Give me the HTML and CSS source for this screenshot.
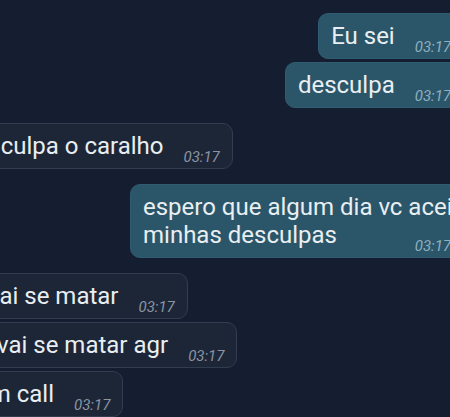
FILE: index.html
```html
<!DOCTYPE html>
<html lang="pt">
<head>
<meta charset="utf-8">
<link rel="stylesheet" href="styles.css">
</head>
<body>
<div class="chat">
  <div class="row out"><div class="bubble"><span class="text">Eu sei</span><span class="time">03:17</span></div></div>
  <div class="row out"><div class="bubble"><span class="text">desculpa</span><span class="time">03:17</span></div></div>
  <div class="row in gap"><div class="bubble cut-a"><span class="text">desculpa o caralho</span><span class="time">03:17</span></div></div>
  <div class="row out gap"><div class="bubble long"><span class="text">espero que algum dia vc aceite<br>minhas desculpas</span><span class="time">03:17</span></div></div>
  <div class="row in gap"><div class="bubble cut-b"><span class="text">vai se matar</span><span class="time">03:17</span></div></div>
  <div class="row in"><div class="bubble cut-c"><span class="text">vai se matar agr</span><span class="time">03:17</span></div></div>
  <div class="row in"><div class="bubble cut-d"><span class="text">em call</span><span class="time">03:17</span></div></div>
</div>
</body>
</html>
```
FILE: styles.css
```css
html, body {
  margin: 0;
  padding: 0;
  width: 450px;
  height: 417px;
  overflow: hidden;
  background: #151d31;
}
.chat {
  display: flex;
  flex-direction: column;
  gap: 3px;
  margin-right: -14px;
  padding-top: 13px;
  font-family: Roboto, "Noto Sans", sans-serif;
}
.row {
  display: flex;
}
.row.out { justify-content: flex-end; }
.row.in { justify-content: flex-start; }
.row.gap { margin-top: 12px; }
.bubble {
  display: flex;
  align-items: flex-end;
  padding: 8px 12px 8px 12px;
  border-radius: 10px;
  white-space: nowrap;
}
.bubble.long {
  display: grid;
  grid-template-columns: minmax(0, 1fr) auto;
  width: 308px;
}
.out .bubble {
  background: #2b5669;
  border: 1px solid #2f5c70;
}
.in .bubble {
  background: #1d2637;
  border: 1px solid #323d50;
}
.text {
  font-size: 24px;
  line-height: 28px;
  color: #e9eef1;
}
.time {
  font-size: 15px;
  line-height: 15px;
  font-style: italic;
  margin-left: 20px;
  margin-bottom: -5px;
}
.out .time { color: #8fb0c0; }
.in .time { color: #8b95a5; }
.cut-a { margin-left: -51px; }
.cut-b { margin-left: -25px; }
.cut-c { margin-left: -16px; }
.cut-d { margin-left: -36px; }
```
